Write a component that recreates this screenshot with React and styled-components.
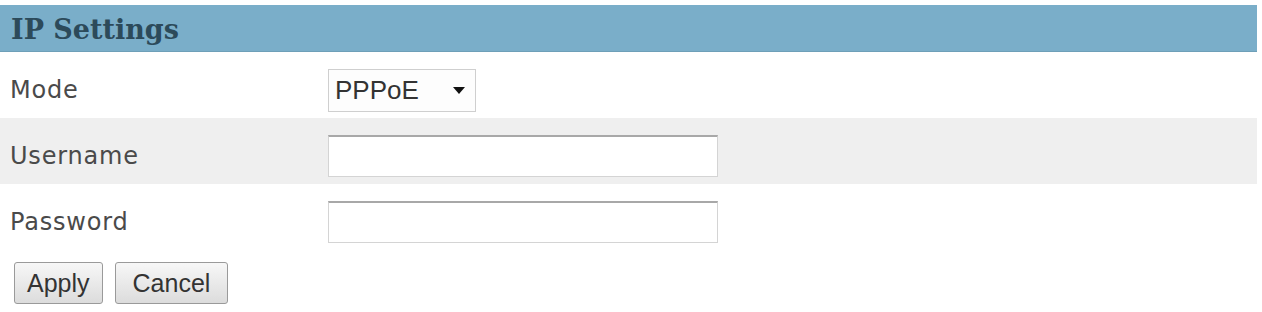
import React, { useState } from "react";
import styled, { createGlobalStyle } from "styled-components";

const GlobalStyle = createGlobalStyle`
  body {
    margin: 0;
    background: #ffffff;
    font-family: "DejaVu Sans", Verdana, sans-serif;
  }
`;

const Page = styled.div`
  width: 1257px;
  padding-top: 5px;
`;

const Header = styled.div`
  height: 47px;
  background: #7aaec9;
  border-bottom: 1px solid #6e9fb8;
  box-sizing: border-box;
  display: flex;
  align-items: center;
  padding: 2px 0 0 11px;
  font-family: "DejaVu Serif", Georgia, serif;
  font-weight: bold;
  font-size: 27px;
  color: #2c4a5a;
`;

const Row = styled.div`
  height: 66px;
  box-sizing: border-box;
  padding-top: 10px;
  display: grid;
  grid-template-columns: 328px 1fr;
  align-items: center;
  background: ${(p) => (p.shaded ? "#efefef" : "#ffffff")};
`;

const Label = styled.div`
  padding-left: 10px;
  font-size: 24px;
  letter-spacing: 0.8px;
  color: #4a4a4a;
`;

const SelectBox = styled.div`
  width: 148px;
  height: 43px;
  box-sizing: border-box;
  border: 1px solid #cfcfcf;
  background: #fdfdfd;
  display: flex;
  align-items: center;
  justify-content: space-between;
  padding: 0 10px 0 6px;
  font-family: "Liberation Sans", Arial, sans-serif;
  font-size: 26px;
  color: #333;
`;

const TextInput = styled.input`
  width: 390px;
  height: 42px;
  box-sizing: border-box;
  margin: 0;
  border: 1px solid #d4d4d4;
  border-top: 2px solid #a8a8a8;
  background: #ffffff;
  outline: none;
  font-size: 20px;
`;

const Buttons = styled.div`
  display: flex;
  gap: 12px;
  padding: 12px 0 0 14px;
`;

const Button = styled.button`
  height: 42px;
  padding: 0 ${(p) => p.pad}px;
  border: 1px solid #9a9a9a;
  border-radius: 3px;
  background: linear-gradient(#f7f7f7, #dcdcdc);
  font-family: "Liberation Sans", Arial, sans-serif;
  font-size: 25px;
  color: #333;
  cursor: pointer;
`;

export default function App() {
  const [user, setUser] = useState("");
  const [pass, setPass] = useState("");

  return (
    <Page>
      <GlobalStyle />
      <Header>IP Settings</Header>
      <Row>
        <Label>Mode</Label>
        <SelectBox>
          <span>PPPoE</span>
          <svg width="12" height="7" viewBox="0 0 12 7">
            <path d="M0 0 L12 0 L6 7 Z" fill="#111" />
          </svg>
        </SelectBox>
      </Row>
      <Row shaded>
        <Label>Username</Label>
        <TextInput value={user} onChange={(e) => setUser(e.target.value)} />
      </Row>
      <Row>
        <Label>Password</Label>
        <TextInput type="password" value={pass} onChange={(e) => setPass(e.target.value)} />
      </Row>
      <Buttons>
        <Button pad={12}>Apply</Button>
        <Button pad={17}>Cancel</Button>
      </Buttons>
    </Page>
  );
}
